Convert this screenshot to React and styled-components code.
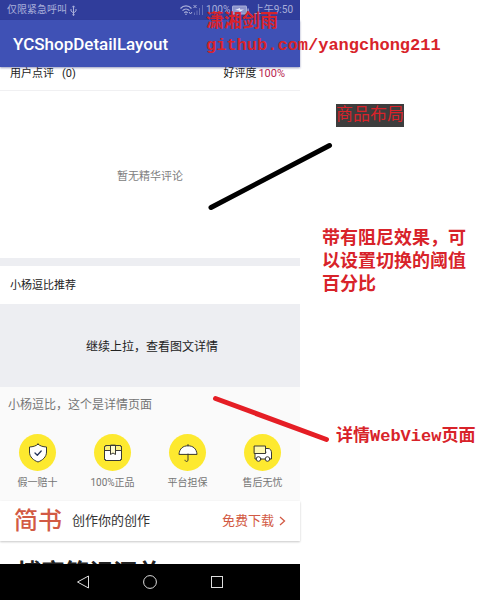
import React from "react";
import styled, { createGlobalStyle } from "styled-components";

const GlobalStyle = createGlobalStyle`
  * { box-sizing: border-box; }
  body { margin: 0; background: #fff; }
  button, a { font: inherit; color: inherit; }
`;

const sans = `Roboto, "Noto Sans CJK SC", sans-serif`;
const mono = `"Liberation Mono", "Noto Sans CJK SC", monospace`;

const Page = styled.div`
  display: grid;
  grid-template-columns: minmax(0, 300fr) minmax(0, 186fr);
  min-height: 100vh;
  font-family: ${sans};
  overflow: hidden;
`;

const Phone = styled.main`
  display: flex;
  flex-direction: column;
  min-width: 0;
  height: 100vh;
  min-height: 600px;
  background: #fff;
`;

const StatusBar = styled.div`
  display: flex;
  flex: none;
  align-items: center;
  justify-content: space-between;
  height: 20px;
  padding: 0 7px;
  background: #303d9b;
  color: #a9afda;
  font-size: 10px;
  line-height: 20px;
  white-space: nowrap;
`;

const StatusGroup = styled.div`
  display: flex;
  align-items: center;
  gap: ${(p) => p.$gap}px;
`;

const AppBar = styled.header`
  flex: none;
  height: 47px;
  padding: 0 13px;
  background: #3f51b5;
  box-shadow: 0 1px 2px rgba(30, 40, 110, 0.45);
  color: #fff;
  z-index: 1;
`;

const AppTitle = styled.h1`
  margin: 0;
  font-size: 17px;
  font-weight: 500;
  line-height: 48px;
`;

const ReviewRow = styled.div`
  display: flex;
  flex: none;
  justify-content: space-between;
  height: 24px;
  padding: 0 15px 0 10px;
  border-bottom: 1px solid #f0f0f2;
  color: #222;
  font-size: 11px;
  line-height: 14px;
`;

const ReviewLabel = styled.span`
  display: flex;
  gap: ${(p) => p.$gap}px;
`;

const Rate = styled.span`
  color: #b8264f;
`;

const EmptyReviews = styled.section`
  display: grid;
  flex: none;
  place-items: center;
  height: 167px;
  color: #808080;
  font-size: 11px;
`;

const Recommend = styled.h2`
  flex: none;
  margin: 0;
  padding: 2px 10px 0;
  border-top: 8px solid #edeef2;
  color: #222;
  font-size: 11px;
  font-weight: 400;
  line-height: 36px;
`;

const PullHint = styled.section`
  display: grid;
  flex: none;
  place-items: center;
  height: 83px;
  padding-left: 4px;
  background: #edeef2;
  color: #222;
  font-size: 12px;
`;

const Detail = styled.section`
  flex: none;
  height: 114px;
  background: #fafafa;
`;

const DetailTitle = styled.p`
  margin: 0;
  padding: 0 8px;
  color: #757575;
  font-size: 12px;
  line-height: 36px;
`;

const Services = styled.ul`
  display: grid;
  grid-template-columns: repeat(4, 1fr);
  margin: 0;
  padding: 11px 0 0;
  list-style: none;
`;

const Service = styled.li`
  display: flex;
  flex-direction: column;
  align-items: center;
  gap: 4px;
  color: #757575;
  font-size: 10px;
  line-height: 16px;
  white-space: nowrap;
`;

const Disc = styled.span`
  display: grid;
  place-items: center;
  width: 37px;
  height: 37px;
  border-radius: 50%;
  background: #fde92f;
`;

const Banner = styled.div`
  display: flex;
  flex: none;
  align-items: center;
  height: 40px;
  padding: 0 14px;
  background: #fff;
  box-shadow: 0 1px 2px rgba(0, 0, 0, 0.22);
  white-space: nowrap;
`;

const Brand = styled.strong`
  color: #d25a44;
  font-size: 24px;
  font-weight: 500;
  line-height: 40px;
`;

const Slogan = styled.span`
  margin-left: 10px;
  color: #333;
  font-size: 13px;
  line-height: 18px;
`;

const Download = styled.a`
  display: flex;
  align-items: center;
  gap: 5px;
  margin-left: auto;
  && { color: #d25a44; }
  font-size: 13px;
  line-height: 18px;
  text-decoration: none;
`;

const Article = styled.article`
  flex: 1 1 0;
  min-height: 0;
  padding: 16px 17px 0;
  overflow: hidden;
`;

const ArticleTitle = styled.h2`
  margin: 0;
  color: #222;
  font-size: 24px;
  font-weight: 700;
  line-height: 32px;
  white-space: nowrap;
`;

const NavBar = styled.nav`
  display: flex;
  flex: none;
  align-items: center;
  justify-content: center;
  gap: 47px;
  height: 36px;
  background: #000;
`;

const NavButton = styled.button`
  display: grid;
  place-items: center;
  width: 20px;
  height: 20px;
  padding: 0;
  border: 0;
  background: none;
`;

const Notes = styled.aside`
  position: relative;
  z-index: 2;
  font-family: ${mono};
  color: #d8232a;
`;

const Note = styled.p`
  position: absolute;
  top: ${(p) => p.$y}px;
  left: ${(p) => p.$x}px;
  margin: 0;
  background: ${(p) => p.$fill || "none"};
  font-size: ${(p) => p.$size}px;
  font-weight: ${(p) => (p.$plain ? 400 : 700)};
  line-height: 23px;
  white-space: pre;
`;

const Pointers = styled.svg`
  position: absolute;
  top: 0;
  left: -100px;
  pointer-events: none;
`;

const outline = {
  fill: "none",
  stroke: "#3a3a35",
  strokeWidth: 1,
  strokeLinejoin: "round",
  strokeLinecap: "round",
};

const ShieldIcon = () => (
  <svg width="20" height="20" viewBox="0 0 20 20" {...outline}>
    <path fill="#fff" d="M10 1.200C8 3 5 3.800 1.500 4V9c0 5 4 8.300 8.500 10 4.500-1.700 8.500-5 8.500-10V4C15 3.800 12 3 10 1.200Z" />
    <path stroke="#26355c" strokeWidth="1.300" d="m7 10 2.300 2.200L13.200 8" />
  </svg>
);

const BoxIcon = () => (
  <svg width="20" height="20" viewBox="0 0 20 20" {...outline}>
    <rect x="1.500" y="2.500" width="17" height="15" rx="2" fill="#fff" />
    <path fill="#fdf07a" stroke="none" d="M2 3h16v4.500H2Z" />
    <path d="M1.500 7.500h17" />
    <path fill="#fffbd0" d="M7.500 2.500v9l2.500-1.500 2.500 1.500v-9Z" />
    <rect x="1.500" y="2.500" width="17" height="15" rx="2" />
  </svg>
);

const UmbrellaIcon = () => (
  <svg width="20" height="20" viewBox="0 0 20 20" {...outline}>
    <path fill="#fff" d="M1 11C1.500 5.500 5 2.800 10 2.800S18.500 5.500 19 11Z" />
    <path d="M10 1.500v1.300M10 11v6c0 2-3 2-3 .2" />
  </svg>
);

const TruckIcon = () => (
  <svg width="20" height="20" viewBox="0 0 20 20" {...outline}>
    <path fill="#fff" d="M12.500 5.500h2.500c2.500 0 3.500 2 3.500 4.500v6H2v-6h10.500Z" />
    <rect x="1.500" y="3" width="11" height="7.500" fill="#fff9b0" />
    <circle cx="5.500" cy="16" r="2.300" fill="#fff" />
    <circle cx="14.500" cy="16" r="2.300" fill="#fff" />
  </svg>
);

const UsbIcon = () => (
  <svg width="7" height="11" viewBox="0 0 7 11" fill="none" stroke="currentColor" aria-hidden="true">
    <path d="M3.500 1v9M1 4v2l2.500 2L6 6V4M2.300 2.300 3.500.8l1.200 1.500" />
    <circle cx="3.500" cy="9.700" r=".7" fill="currentColor" />
  </svg>
);

const SignalIcon = () => (
  <svg width="24" height="12" viewBox="0 0 24 12" fill="none" stroke="currentColor" aria-hidden="true">
    <path strokeWidth="1.200" d="M.5 4.500C3.500 1 8.500 1 11.500 4.500M2.500 6.700c2-2 5-2 7 0M4.300 8.800c1-1 2.400-1 3.400 0" />
    <circle cx="6" cy="10.300" r=".8" fill="currentColor" stroke="none" />
    <path d="m9 8 1.500 2L12 8M13.500 1l3 3m0-3-3 3" />
    <path opacity=".45" d="M14.500 11V8.500M17 11V6.500M19.500 11V4M22.500 11V1" />
  </svg>
);

const BatteryIcon = () => (
  <svg width="17" height="10" viewBox="0 0 17 10" aria-hidden="true">
    <rect x=".5" y="1" width="14" height="8" rx=".5" fill="#8d94cb" stroke="#a9afda" />
    <path d="M15.500 3.500h1.200v3h-1.200Z" fill="#a9afda" />
    <path d="m3 5 5-2v1.500h4L7.500 7V5.500Z" fill="#e5e8fa" />
  </svg>
);

const services = [
  { label: "假一赔十", Icon: ShieldIcon },
  { label: "100%正品", Icon: BoxIcon },
  { label: "平台担保", Icon: UmbrellaIcon },
  { label: "售后无忧", Icon: TruckIcon },
];

const notes = [
  { x: -94, y: 11, size: 18, text: "潇湘剑雨" },
  { x: -94, y: 34, size: 17, text: "github.com/yangchong211" },
  { x: 36, y: 104, size: 17, text: "商品布局", fill: "#3d3d3d", plain: true },
  { x: 22, y: 228, size: 18, text: "带有阻尼效果，可\n以设置切换的阈值\n百分比" },
  { x: 36, y: 425, size: 17, text: "详情WebView页面" },
];

export default function App() {
  return (
    <Page>
      <GlobalStyle />
      <Phone>
        <StatusBar>
          <StatusGroup $gap={3}>
            <span>仅限紧急呼叫</span>
            <UsbIcon />
          </StatusGroup>
          <StatusGroup $gap={2}>
            <SignalIcon />
            <span>100%</span>
            <BatteryIcon />
            <span>&nbsp;上午9:50</span>
          </StatusGroup>
        </StatusBar>
        <AppBar>
          <AppTitle>YCShopDetailLayout</AppTitle>
        </AppBar>
        <ReviewRow>
          <ReviewLabel $gap={8}>
            <span>用户点评</span>
            <span>(0)</span>
          </ReviewLabel>
          <ReviewLabel $gap={2}>
            <span>好评度</span>
            <Rate>100%</Rate>
          </ReviewLabel>
        </ReviewRow>
        <EmptyReviews>暂无精华评论</EmptyReviews>
        <Recommend>小杨逗比推荐</Recommend>
        <PullHint>继续上拉，查看图文详情</PullHint>
        <Detail>
          <DetailTitle>小杨逗比，这个是详情页面</DetailTitle>
          <Services>
            {services.map(({ label, Icon }) => (
              <Service key={label}>
                <Disc>
                  <Icon />
                </Disc>
                {label}
              </Service>
            ))}
          </Services>
        </Detail>
        <Banner>
          <Brand>简书</Brand>
          <Slogan>创作你的创作</Slogan>
          <Download href="#download">
            免费下载
            <svg width="7" height="10" viewBox="0 0 7 10" fill="none" stroke="currentColor" strokeWidth="1.300" aria-hidden="true">
              <path d="m1 1 4.500 4L1 9" />
            </svg>
          </Download>
        </Banner>
        <Article>
          <ArticleTitle>博客笔记汇总</ArticleTitle>
        </Article>
        <NavBar>
          <NavButton aria-label="Back">
            <svg width="14" height="14" viewBox="0 0 14 14" fill="none" stroke="#ddd">
              <path d="M12.500 1v12L1.500 7Z" />
            </svg>
          </NavButton>
          <NavButton aria-label="Home">
            <svg width="14" height="14" viewBox="0 0 14 14" fill="none" stroke="#ddd">
              <circle cx="7" cy="7" r="6.400" />
            </svg>
          </NavButton>
          <NavButton aria-label="Recent apps">
            <svg width="14" height="14" viewBox="0 0 14 14" fill="none" stroke="#ddd">
              <rect x="1.500" y="1.500" width="11" height="11" />
            </svg>
          </NavButton>
        </NavBar>
      </Phone>
      <Notes>
        <Pointers width="140" height="460" viewBox="0 0 140 460" fill="none" strokeWidth="5" strokeLinecap="round" aria-hidden="true">
          <path stroke="#000" d="M11 207.500 129.500 145.500" />
          <path stroke="#e51e25" d="M15.500 398.500 126.500 439.500" />
        </Pointers>
        {notes.map((n) => (
          <Note key={n.text} $x={n.x} $y={n.y} $size={n.size} $fill={n.fill} $plain={n.plain}>
            {n.text}
          </Note>
        ))}
      </Notes>
    </Page>
  );
}
